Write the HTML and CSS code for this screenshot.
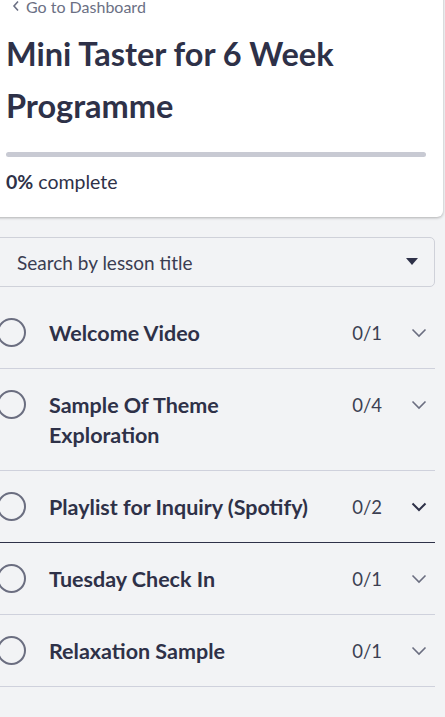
FILE: index.html
```html
<!DOCTYPE html>
<html lang="en">
<head>
<meta charset="utf-8">
<title>Mini Taster for 6 Week Programme</title>
<link rel="stylesheet" href="styles.css">
</head>
<body>
<div class="sidebar">
  <header class="header">
    <a class="back" href="#"><svg class="back-icon" viewBox="0 0 8 12" width="8" height="12"><path d="M6 1.5 L2 6 L6 10.5" fill="none" stroke="currentColor" stroke-width="1.6"/></svg>Go to Dashboard</a>
    <h1 class="title">Mini Taster for 6 Week Programme</h1>
    <div class="progress"><div class="progress-fill" style="width:0%"></div></div>
    <p class="progress-text"><strong>0%</strong> complete</p>
  </header>
  <main class="content">
    <div class="search">
      <span class="search-text">Search by lesson title</span>
      <svg class="caret" viewBox="0 0 12 8" width="12" height="8"><path d="M0 0 H12 L6 7 Z" fill="currentColor"/></svg>
    </div>
    <ul class="lessons">
      <li class="lesson">
        <span class="circle"></span>
        <span class="lesson-title">Welcome Video</span>
        <span class="count">0/1</span>
        <svg class="chev" viewBox="0 0 16 10" width="16" height="10"><path d="M1.5 1.5 L8 8 L14.5 1.5" fill="none" stroke="currentColor" stroke-width="1.6"/></svg>
      </li>
      <li class="lesson">
        <span class="circle"></span>
        <span class="lesson-title">Sample Of Theme<br>Exploration</span>
        <span class="count">0/4</span>
        <svg class="chev" viewBox="0 0 16 10" width="16" height="10"><path d="M1.5 1.5 L8 8 L14.5 1.5" fill="none" stroke="currentColor" stroke-width="1.6"/></svg>
      </li>
      <li class="lesson lesson-focus">
        <span class="circle"></span>
        <span class="lesson-title">Playlist for Inquiry (Spotify)</span>
        <span class="count">0/2</span>
        <svg class="chev" viewBox="0 0 16 10" width="16" height="10"><path d="M1.5 1.5 L8 8 L14.5 1.5" fill="none" stroke="currentColor" stroke-width="2"/></svg>
      </li>
      <li class="lesson">
        <span class="circle"></span>
        <span class="lesson-title">Tuesday Check In</span>
        <span class="count">0/1</span>
        <svg class="chev" viewBox="0 0 16 10" width="16" height="10"><path d="M1.5 1.5 L8 8 L14.5 1.5" fill="none" stroke="currentColor" stroke-width="1.6"/></svg>
      </li>
      <li class="lesson">
        <span class="circle"></span>
        <span class="lesson-title">Relaxation Sample</span>
        <span class="count">0/1</span>
        <svg class="chev" viewBox="0 0 16 10" width="16" height="10"><path d="M1.5 1.5 L8 8 L14.5 1.5" fill="none" stroke="currentColor" stroke-width="1.6"/></svg>
      </li>
    </ul>
  </main>
</div>
</body>
</html>
```

FILE: styles.css
```css
* { box-sizing: border-box; }
html, body {
  margin: 0;
  padding: 0;
  background: #f2f3f5;
  overflow: hidden;
}
body {
  font-family: Lato, "Liberation Sans", sans-serif;
  color: #2e3148;
}
.sidebar {
  margin-left: -16px;
  width: 459px;
}
.header {
  background: #ffffff;
  padding: 0 17px 22px 22px;
  border-radius: 0 0 6px 6px;
  box-shadow: 0 1px 3px rgba(0, 0, 0, 0.28);
}
.back {
  display: flex;
  align-items: center;
  gap: 6px;
  margin-top: -6px;
  height: 24px;
  padding-left: 6px;
  font-size: 16px;
  color: #6b7084;
  text-decoration: none;
}
.back-icon { display: block; }
.title {
  margin: 10px 0 0 0;
  font-size: 32.5px;
  line-height: 52px;
  font-weight: 700;
  color: #2e3148;
  width: 380px;
}
.progress {
  margin-top: 20px;
  height: 5px;
  width: 420px;
  background: #c8cad3;
  border-radius: 3px;
  overflow: hidden;
}
.progress-fill {
  height: 100%;
  background: #2e3148;
}
.progress-text {
  margin: 12px 0 0 0;
  font-size: 19.5px;
  line-height: 26px;
}
.progress-text strong { font-weight: 700; }
.content {
  padding: 20px 8px 0 0;
}
.search {
  display: flex;
  align-items: center;
  justify-content: space-between;
  height: 50px;
  margin-left: 10px;
  padding: 0 16px 0 22px;
  background: #f2f3f5;
  border: 1px solid #cfd1d9;
  border-radius: 5px;
}
.search-text {
  font-size: 19px;
  color: #3a3d52;
}
.caret { color: #2e3148; display: block; }
.lessons {
  list-style: none;
  margin: 10px 0 0 0;
  padding: 0 0 0 16px;
}
.lesson {
  display: flex;
  align-items: flex-start;
  padding: 20.5px 8px 20.5px 0;
  border-bottom: 1px solid #cfd1dc;
}
.lesson-focus { border-bottom-color: #2e3148; }
.circle {
  flex: none;
  width: 29px;
  height: 29px;
  margin: 0 23px 0 -3px;
  border: 2px solid #6b6e80;
  border-radius: 50%;
}
.lesson-title {
  flex: 1;
  font-size: 21.5px;
  line-height: 30px;
  font-weight: 700;
  color: #2e3148;
}
.count {
  flex: none;
  font-size: 18.5px;
  line-height: 30px;
  color: #3c3f52;
  margin-right: 29px;
}
.chev {
  flex: none;
  margin-top: 10px;
  color: #6b6e80;
  display: block;
}
.lesson-focus .chev { color: #2e3148; }
```
